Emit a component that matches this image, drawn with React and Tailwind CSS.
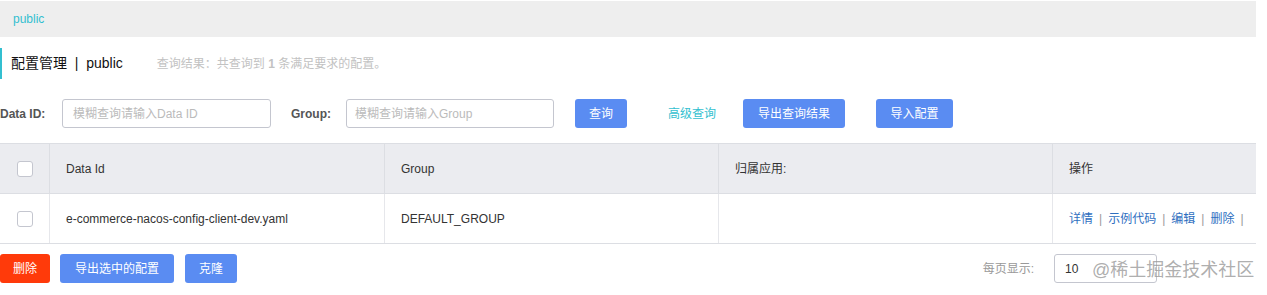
import React from 'react'

const font = { fontFamily: '"Liberation Sans", "Noto Sans CJK SC", sans-serif' }

function Button({ children, className = '' }) {
  return (
    <button className={`h-[29px] rounded-[3px] whitespace-nowrap text-[12px] text-white bg-[#5a8cf2] ${className}`}>
      {children}
    </button>
  )
}

function Checkbox() {
  return <span className="block w-[16px] h-[16px] rounded-[3px] border border-[#c4c6cf] bg-white" />
}

export default function App() {
  const cols = ['w-[50px]', 'w-[335px]', 'w-[334px]', 'w-[334px]', 'flex-1']

  return (
    <div className="relative w-[1267px] h-[295px] bg-white text-[#333] overflow-hidden" style={font}>
      <div className="w-[1256px]">
        {/* ── BREADCRUMB BAR ── */}
        <div className="mt-[1px] h-[36px] bg-[#eeeeee] flex items-center pl-[13px] text-[12px] text-[#33bfd0]">
          public
        </div>

        {/* ── TITLE ── */}
        <div className="mt-[11px] h-[31px] border-l-2 border-[#33bfd0] flex items-center pl-[9px]">
          <span className="text-[14px] text-[#111]">配置管理&nbsp;&nbsp;|&nbsp;&nbsp;public</span>
          <span className="ml-[34px] text-[12px] text-[#c2c2c2]">查询结果：共查询到 <b>1</b> 条满足要求的配置。</span>
        </div>

        {/* ── SEARCH ── */}
        <div className="mt-[20px] flex items-center h-[29px] text-[12px]">
          <span className="font-bold text-[#555] w-[62px]">Data ID:</span>
          <div className="w-[209px] h-[29px] border border-[#c4c6cf] rounded-[3px] flex items-center px-[10px] text-[#bbb]">
            模糊查询请输入Data ID
          </div>
          <span className="ml-[20px] font-bold text-[#555] w-[55px]">Group:</span>
          <div className="w-[208px] h-[29px] border border-[#c4c6cf] rounded-[3px] flex items-center px-[8px] text-[#bbb]">
            模糊查询请输入Group
          </div>
          <Button className="ml-[21px] w-[52px]">查询</Button>
          <span className="ml-[41px] text-[#33bfd0]">高级查询</span>
          <Button className="ml-[27px] w-[102px]">导出查询结果</Button>
          <Button className="ml-[31px] w-[77px]">导入配置</Button>
        </div>

        {/* ── TABLE ── */}
        <div className="mt-[15px] border-t border-[#dcdee3] text-[12px]">
          <div className="flex h-[50px] bg-[#ebecf0] border-b border-[#dcdee3]">
            <div className={`${cols[0]} flex items-center pl-[17px] border-r border-[#dcdee3]`}><Checkbox /></div>
            <div className={`${cols[1]} flex items-center pl-[16px] border-r border-[#dcdee3]`}>Data Id</div>
            <div className={`${cols[2]} flex items-center pl-[16px] border-r border-[#dcdee3]`}>Group</div>
            <div className={`${cols[3]} flex items-center pl-[16px] border-r border-[#dcdee3]`}>归属应用:</div>
            <div className={`${cols[4]} flex items-center pl-[16px]`}>操作</div>
          </div>
          <div className="flex h-[50px] border-b border-[#dcdee3]">
            <div className={`${cols[0]} flex items-center pl-[17px] border-r border-[#e6e7eb]`}><Checkbox /></div>
            <div className={`${cols[1]} flex items-center pl-[16px] border-r border-[#e6e7eb]`}>e-commerce-nacos-config-client-dev.yaml</div>
            <div className={`${cols[2]} flex items-center pl-[16px] border-r border-[#e6e7eb]`}>DEFAULT_GROUP</div>
            <div className={`${cols[3]} border-r border-[#e6e7eb]`} />
            <div className={`${cols[4]} flex items-center pl-[16px] text-[#2f6fbf]`}>
              详情<span className="mx-[6px] text-[#999]">|</span>示例代码<span className="mx-[6px] text-[#999]">|</span>编辑<span className="mx-[6px] text-[#999]">|</span>删除<span className="ml-[6px] text-[#999]">|</span>
            </div>
          </div>
        </div>

        {/* ── FOOTER ── */}
        <div className="mt-[10px] flex items-center h-[29px] text-[12px]">
          <button className="h-[29px] w-[50px] rounded-[3px] bg-[#ff3a0a] text-white">删除</button>
          <Button className="ml-[10px] w-[114px]">导出选中的配置</Button>
          <Button className="ml-[11px] w-[52px]">克隆</Button>
          <span className="ml-auto text-[#999]">每页显示:</span>
          <div className="ml-[20px] w-[103px] h-[29px] border border-[#c4c6cf] rounded-[3px] flex items-center pl-[10px] text-[#333] mr-[99px]">
            10
          </div>
        </div>
      </div>

      {/* watermark */}
      <span className="absolute left-[1092px] top-[257px] text-[18px] text-[#999]/80">@稀土掘金技术社区</span>
    </div>
  )
}
